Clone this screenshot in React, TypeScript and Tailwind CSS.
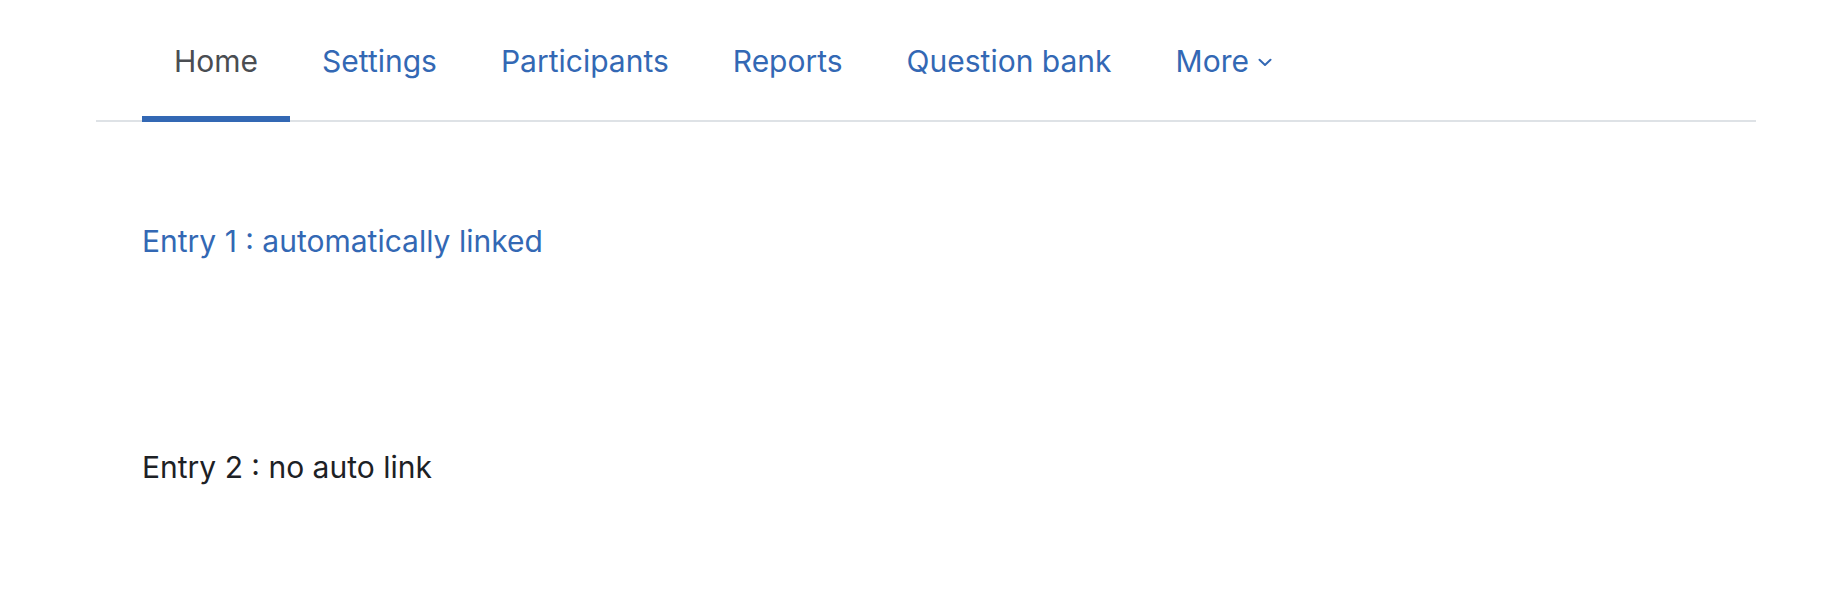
const tabs = ['Home', 'Settings', 'Participants', 'Reports', 'Question bank'];

function Chevron() {
  return (
    <svg width="14" height="9" viewBox="0 0 14 9" className="ml-[9px] mt-[2px]" fill="none">
      <path d="M1.5 1.8L7 7L12.5 1.8" stroke="currentColor" strokeWidth="2" strokeLinecap="round" strokeLinejoin="round" />
    </svg>
  );
}

export default function App() {
  return (
    <div className="min-h-screen bg-white font-['Inter','Liberation_Sans',sans-serif] text-[30px]">
      <div className="pl-[96px] pr-[80px]">
        <ul className="flex border-b-2 border-[#dee2e6] pl-[46px]">
          {tabs.map((tab, i) => (
            <li key={tab}>
              <a
                href="#"
                className={`-mb-[2px] block border-b-[6px] px-[32px] pt-[41px] pb-[35px] leading-[40px] ${
                  i === 0 ? 'border-[#3368b4] text-[#4a4d52]' : 'border-transparent text-[#3368b4]'
                }`}
              >
                {tab}
              </a>
            </li>
          ))}
          <li>
            <a href="#" className="-mb-[2px] flex items-center border-b-[6px] border-transparent px-[32px] pt-[41px] pb-[35px] leading-[40px] text-[#3368b4]">
              More
              <Chevron />
            </a>
          </li>
        </ul>

        <div className="pl-[46px]">
          <a href="#" className="mt-[98px] block leading-[42px] text-[#3368b4]">
            Entry 1 : automatically linked
          </a>
          <p className="mt-[184px] leading-[42px] text-[#1d2125]">Entry 2 : no auto link</p>
        </div>
      </div>
    </div>
  );
}
